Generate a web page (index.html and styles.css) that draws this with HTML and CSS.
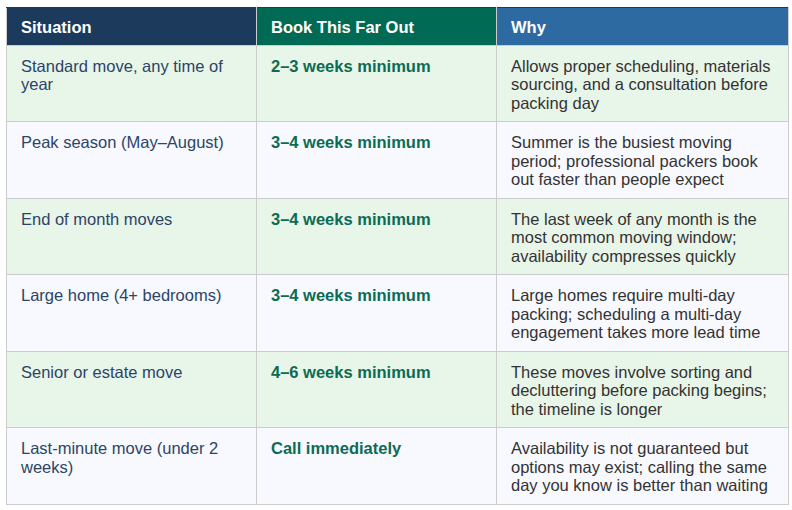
FILE: index.html
```html
<!DOCTYPE html>
<html>
<head>
<meta charset="utf-8">
<link rel="stylesheet" href="styles.css">
</head>
<body>
<table class="lead-table">
  <colgroup>
    <col class="c1"><col class="c2"><col class="c3">
  </colgroup>
  <thead>
    <tr>
      <th class="h-sit">Situation</th>
      <th class="h-book">Book This Far Out</th>
      <th class="h-why">Why</th>
    </tr>
  </thead>
  <tbody>
    <tr class="odd">
      <td class="sit">Standard move, any time of year</td>
      <td class="book">2–3 weeks minimum</td>
      <td class="why">Allows proper scheduling, materials sourcing, and a consultation before packing day</td>
    </tr>
    <tr class="even">
      <td class="sit">Peak season (May–August)</td>
      <td class="book">3–4 weeks minimum</td>
      <td class="why">Summer is the busiest moving period; professional packers book out faster than people expect</td>
    </tr>
    <tr class="odd">
      <td class="sit">End of month moves</td>
      <td class="book">3–4 weeks minimum</td>
      <td class="why">The last week of any month is the most common moving window; availability compresses quickly</td>
    </tr>
    <tr class="even">
      <td class="sit">Large home (4+ bedrooms)</td>
      <td class="book">3–4 weeks minimum</td>
      <td class="why">Large homes require multi-day packing; scheduling a multi-day engagement takes more lead time</td>
    </tr>
    <tr class="odd">
      <td class="sit">Senior or estate move</td>
      <td class="book">4–6 weeks minimum</td>
      <td class="why">These moves involve sorting and decluttering before packing begins; the timeline is longer</td>
    </tr>
    <tr class="even">
      <td class="sit">Last-minute move (under 2 weeks)</td>
      <td class="book">Call immediately</td>
      <td class="why">Availability is not guaranteed but options may exist; calling the same day you know is better than waiting</td>
    </tr>
  </tbody>
</table>
</body>
</html>
```

FILE: styles.css
```css
html, body {
  background: #ffffff;
}
body {
  margin: 7px 0 0 6px;
  font-family: "Liberation Sans", Arial, sans-serif;
  font-size: 16.5px;
  line-height: 18.5px;
}
.lead-table {
  border-collapse: collapse;
  table-layout: fixed;
  width: 782px;
  border: 1px solid #cccccc;
}
.c1 { width: 250px; }
.c2 { width: 240px; }
.c3 { width: 292px; }
th, td {
  text-align: left;
  vertical-align: top;
  padding: 11px 8px 9px 14px;
  border: 1px solid #cccccc;
}
th {
  color: #ffffff;
  font-weight: bold;
  padding-top: 10px;
  padding-bottom: 8px;
  border-top: 1px solid #1b3a5c;
}
.h-sit { background: #1b3a5c; border-top-color: #1b3a5c; }
.h-book { background: #006a54; border-top-color: #1b3a5c; }
.h-why { background: #2e6aa2; border-top-color: #1b3a5c; }
tr.odd td { background: #e8f5e9; }
tr.even td { background: #f8f9fe; }
.sit { color: #2c4466; }
.book { color: #0b6b54; font-weight: bold; }
.why { color: #333333; }
```
